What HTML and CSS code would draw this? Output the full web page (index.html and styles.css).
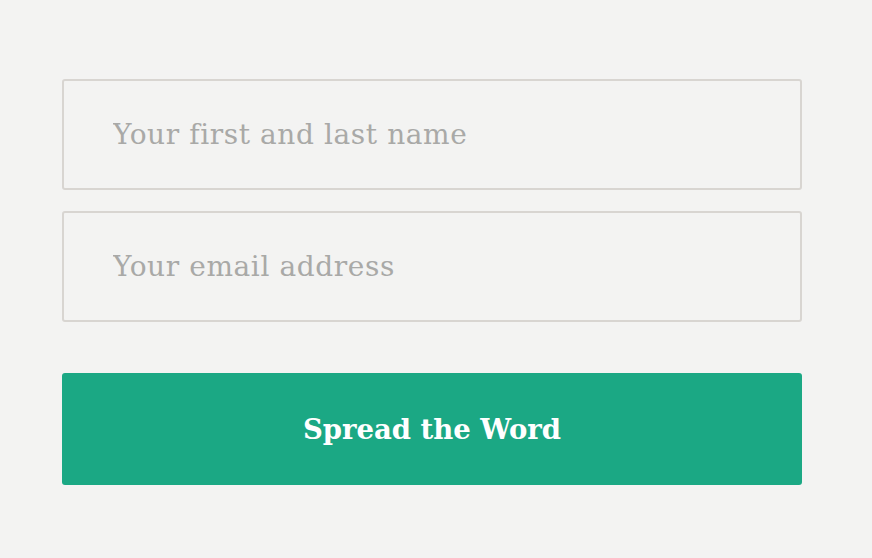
FILE: index.html
```html
<!DOCTYPE html>
<html>
<head>
<meta charset="utf-8">
<link rel="stylesheet" href="styles.css">
</head>
<body>
<form class="signup">
  <input class="field" type="text" placeholder="Your first and last name">
  <input class="field" type="email" placeholder="Your email address">
  <button class="submit" type="button">Spread the Word</button>
</form>
</body>
</html>
```
FILE: styles.css
```css
html, body {
  margin: 0;
  background: #f3f3f2;
}
body {
  padding: 79px 0 0 62px;
}
.signup {
  width: 740px;
  display: flex;
  flex-direction: column;
}
.field {
  box-sizing: border-box;
  height: 111px;
  width: 100%;
  margin: 0 0 21px 0;
  padding: 0 0 0 49px;
  border: 2px solid #d8d5d1;
  border-radius: 3px;
  background: #f3f3f2;
  font-family: "DejaVu Serif", "Liberation Serif", serif;
  font-size: 28px;
  letter-spacing: 0.6px;
  color: #333;
  outline: none;
}
.field::placeholder {
  color: #a9a9a7;
}
.field:last-of-type {
  margin-bottom: 51px;
}
.submit {
  height: 112px;
  width: 100%;
  border: none;
  border-radius: 3px;
  background: #1ba884;
  color: #ffffff;
  font-family: "DejaVu Serif", "Liberation Serif", serif;
  font-weight: bold;
  font-size: 27.5px;
  cursor: pointer;
}
```
